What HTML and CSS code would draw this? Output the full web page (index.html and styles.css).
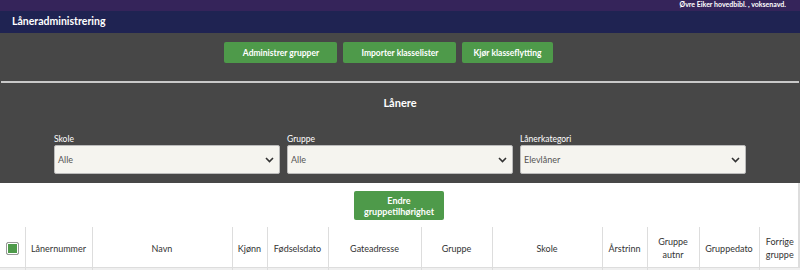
FILE: index.html
```html
<!DOCTYPE html>
<html lang="no">
<head>
  <meta charset="UTF-8">
  <meta name="viewport" content="width=device-width, initial-scale=1.0">
  <title>Låneradministrering</title>
  <link rel="stylesheet" href="styles.css">
</head>
<body>
<div class="top-bar">Øvre Eiker hovedbibl. , voksenavd.</div>
<div class="title-bar">Låneradministrering</div>

<div class="panel">
  <div class="actions admin-actions">
    <button class="btn">Administrer grupper</button>
    <button class="btn">Importer klasselister</button>
    <button class="btn">Kjør klasseflytting</button>
  </div>
  <hr class="divider">
  <h2 class="panel-title">Lånere</h2>
  <div class="filters">
    <div class="field">
      <label>Skole</label>
      <div class="select"><span>Alle</span>
        <svg width="9" height="6" viewBox="0 0 9 6"><path d="M1 1l3.5 3.5L8 1" fill="none" stroke="#333" stroke-width="1.6"/></svg>
      </div>
    </div>
    <div class="field">
      <label>Gruppe</label>
      <div class="select"><span>Alle</span>
        <svg width="9" height="6" viewBox="0 0 9 6"><path d="M1 1l3.5 3.5L8 1" fill="none" stroke="#333" stroke-width="1.6"/></svg>
      </div>
    </div>
    <div class="field">
      <label>Lånerkategori</label>
      <div class="select"><span>Elevlåner</span>
        <svg width="9" height="6" viewBox="0 0 9 6"><path d="M1 1l3.5 3.5L8 1" fill="none" stroke="#333" stroke-width="1.6"/></svg>
      </div>
    </div>
  </div>
</div>

<div class="content">
  <div class="actions">
    <button class="btn btn-tall">Endre<br>gruppetilhørighet</button>
  </div>
  <table class="borrowers">
    <colgroup>
      <col style="width:25px"><col style="width:67px"><col style="width:140px"><col style="width:35px">
      <col style="width:61px"><col style="width:93px"><col style="width:71px"><col style="width:110px">
      <col style="width:45px"><col style="width:52px"><col style="width:60px"><col style="width:41px">
    </colgroup>
    <thead>
      <tr>
        <th><span class="check"></span></th>
        <th>Lånernummer</th>
        <th>Navn</th>
        <th>Kjønn</th>
        <th>Fødselsdato</th>
        <th>Gateadresse</th>
        <th>Gruppe</th>
        <th>Skole</th>
        <th>Årstrinn</th>
        <th>Gruppe autnr</th>
        <th>Gruppedato</th>
        <th>Forrige gruppe</th>
      </tr>
    </thead>
    <tbody>
      <tr><td></td><td></td><td></td><td></td><td></td><td></td><td></td><td></td><td></td><td></td><td></td><td></td></tr>
    </tbody>
  </table>
</div>
</body>
</html>
```

FILE: styles.css
```css
body {
  margin: 0;
  font-family: "Lato", "Open Sans", sans-serif;
  background: #fff;
  color: #333;
  overflow: hidden;
}
.top-bar {
  background: #35245a;
  color: #fff;
  font-size: 7px;
  font-weight: bold;
  text-align: right;
  height: 11px;
  line-height: 9px;
  padding-right: 14px;
}
.title-bar {
  background: #1f2352;
  color: #fff;
  font-size: 10.5px;
  font-weight: bold;
  height: 22px;
  line-height: 21px;
  padding-left: 12px;
}
.panel {
  background: #474747;
  color: #fff;
  padding-top: 9px;
  height: 141px;
}
.actions {
  display: flex;
  justify-content: center;
  gap: 6px;
}
.admin-actions {
  padding-right: 23px;
}
.btn {
  background: #4e9a4a;
  color: #fff;
  border: none;
  border-radius: 2px;
  font-family: inherit;
  font-size: 8.5px;
  font-weight: bold;
  height: 21px;
  min-width: 113px;
  padding: 0 11px;
  cursor: pointer;
}
.actions .btn:last-child {
  min-width: 0;
}
.btn-tall {
  height: 29px;
  width: 90px;
  padding: 0;
  font-size: 9px;
  line-height: 11px;
}
.divider {
  border: none;
  border-top: 2px solid #c9c9c9;
  margin: 18px 1px 0 1px;
}
.panel-title {
  margin: 13px 0 0 0;
  text-align: center;
  font-size: 11px;
  font-weight: bold;
}
.filters {
  display: flex;
  gap: 7px;
  margin: 24px 54px 0 54px;
}
.field {
  flex: 1;
  display: flex;
  flex-direction: column;
}
.field label {
  font-size: 8.5px;
  line-height: 12px;
}
.select {
  background: #f5f4ef;
  color: #555;
  border: 1px solid #bbb;
  border-radius: 2px;
  height: 27px;
  display: flex;
  align-items: center;
  justify-content: space-between;
  padding: 0 5px 0 3px;
  font-size: 9px;
}
.content {
  padding-top: 8px;
  border-right: 2px solid #ddd;
}
.borrowers {
  margin-top: 7px;
  width: 800px;
  table-layout: fixed;
  border-collapse: collapse;
}
.borrowers th {
  border-left: 1px solid #ddd;
  font-size: 9px;
  font-weight: normal;
  color: #333;
  height: 38px;
  padding: 2px 2px 0 2px;
  line-height: 13px;
  border-bottom: 1px solid #ddd;
}
.borrowers th:first-child {
  border-left: none;
}
.borrowers td {
  border-left: 1px solid #ddd;
  background: #efefef;
  height: 10px;
}
.borrowers td:first-child {
  border-left: none;
}
.check {
  display: inline-block;
  width: 11px;
  height: 11px;
  background: #4e9a4a;
  border: 1px solid #999;
  border-radius: 2px;
  box-shadow: inset 0 0 0 1px #fff;
  vertical-align: middle;
}
```
